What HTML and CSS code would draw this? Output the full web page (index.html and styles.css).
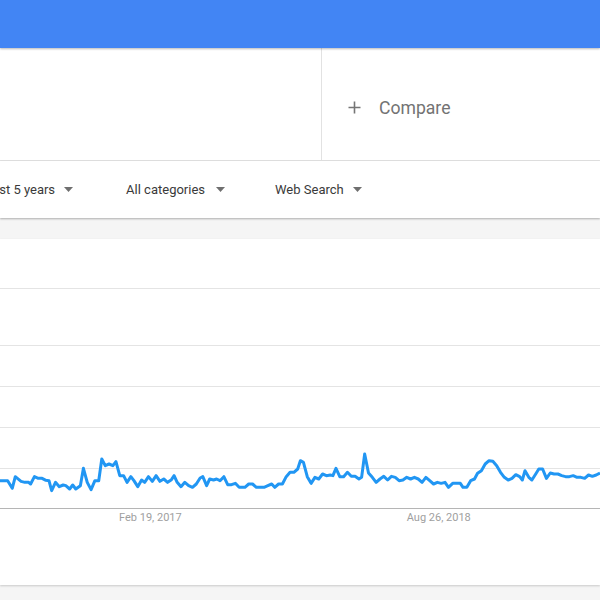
FILE: index.html
```html
<!DOCTYPE html>
<html lang="en">
<head>
<meta charset="utf-8">
<title>Trends</title>
<link rel="stylesheet" href="styles.css">
</head>
<body>
  <header class="topbar"></header>
  <section class="search-panel">
    <div class="term-box"></div>
    <div class="compare">
      <svg class="plus" width="13" height="13" viewBox="0 0 13 13"><path d="M6.5 0.5V12.5M0.5 6.5H12.5"/></svg>
      <span class="compare-label">Compare</span>
    </div>
  </section>
  <nav class="filters">
    <div class="filter first">Past 5 years<svg class="caret" width="9" height="5" viewBox="0 0 9 5"><path d="M0 0H9L4.5 5Z"/></svg></div>
    <div class="filter second">All categories<svg class="caret wide" width="9" height="5" viewBox="0 0 9 5"><path d="M0 0H9L4.5 5Z"/></svg></div>
    <div class="filter">Web Search<svg class="caret" width="9" height="5" viewBox="0 0 9 5"><path d="M0 0H9L4.5 5Z"/></svg></div>
  </nav>
  <main class="chart-card">
    <svg class="plot" width="600" height="270" viewBox="0 60 1568 810" preserveAspectRatio="none">
      <g class="grid">
        <line x1="0" x2="1568" y1="208.5" y2="208.5" vector-effect="non-scaling-stroke"/>
        <line x1="0" x2="1568" y1="379.5" y2="379.5" vector-effect="non-scaling-stroke"/>
        <line x1="0" x2="1568" y1="502.5" y2="502.5" vector-effect="non-scaling-stroke"/>
        <line x1="0" x2="1568" y1="625.5" y2="625.5" vector-effect="non-scaling-stroke"/>
        <line x1="0" x2="1568" y1="748.5" y2="748.5" vector-effect="non-scaling-stroke"/>
      </g>
      <line class="axis" x1="0" x2="1568" y1="868.5" y2="868.5" vector-effect="non-scaling-stroke"/>
      <polyline class="series" vector-effect="non-scaling-stroke" points="0,785 20,785 32,808 40,773 55,787 65,790 75,790 80,795 90,773 100,778 110,778 120,784 128,785 135,815 145,790 155,803 165,798 172,800 182,810 190,798 198,810 210,800 218,748 228,790 238,812 248,785 258,785 266,720 275,740 285,735 295,740 303,728 313,770 323,770 332,790 342,773 350,785 360,803 370,783 378,790 388,773 398,787 408,770 418,787 428,780 438,790 448,782 455,770 463,790 473,803 483,790 493,800 503,805 513,795 523,777 530,773 540,800 548,780 558,783 566,780 575,785 585,773 595,797 605,797 615,793 625,805 640,805 650,795 660,795 670,805 690,805 700,800 710,795 718,805 728,795 738,795 748,773 758,760 768,760 778,750 785,725 793,730 803,773 813,793 823,775 833,780 843,765 853,770 863,768 870,770 878,748 888,773 898,773 908,760 918,772 928,772 938,780 945,775 953,705 963,762 973,775 983,790 993,780 1003,772 1013,783 1023,772 1033,775 1043,785 1053,783 1063,775 1073,780 1083,775 1093,780 1103,790 1113,775 1123,785 1133,795 1143,790 1153,793 1163,790 1172,805 1183,793 1193,793 1203,793 1210,805 1220,805 1230,785 1240,780 1248,763 1258,755 1268,735 1278,725 1288,727 1298,740 1308,760 1318,775 1328,783 1338,778 1348,767 1358,773 1365,783 1372,755 1382,775 1390,783 1400,765 1408,750 1418,750 1428,778 1438,762 1448,765 1458,765 1468,770 1478,773 1488,773 1498,770 1508,775 1518,775 1528,778 1538,768 1548,772 1558,768 1568,762"/>
    </svg>
    <div class="x-labels">
      <span class="x-label feb">Feb 19, 2017</span>
      <span class="x-label aug">Aug 26, 2018</span>
    </div>
  </main>
</body>
</html>
```
FILE: styles.css
```css
html, body {
  margin: 0;
  padding: 0;
}
body {
  width: 600px;
  height: 600px;
  overflow: hidden;
  background: #f5f5f5;
  font-family: Roboto, "Liberation Sans", Arial, sans-serif;
}
.topbar {
  height: 48px;
  background: #4285f4;
  box-shadow: 0 1px 2px rgba(0, 0, 0, 0.28);
  position: relative;
  z-index: 2;
}
.search-panel {
  display: flex;
  height: 112px;
  background: #fff;
  border-bottom: 1px solid #e2e2e2;
}
.term-box {
  width: 321px;
  border-right: 1px solid #e2e2e2;
}
.compare {
  display: flex;
  align-items: center;
  padding-left: 26px;
  padding-top: 7px;
}
.plus {
  display: block;
  fill: none;
  stroke: #757575;
  stroke-width: 1.6;
}
.compare-label {
  margin-left: 18px;
  font-size: 17.6px;
  color: #737373;
}
.filters {
  display: flex;
  align-items: center;
  height: 57px;
  background: #fff;
  box-shadow: 0 1px 2px rgba(0, 0, 0, 0.3);
  position: relative;
  z-index: 1;
  overflow: hidden;
}
.filter {
  display: flex;
  align-items: center;
  font-size: 13px;
  color: #3a3a3a;
  white-space: nowrap;
}
.filter.first {
  margin-left: -16px;
  margin-right: 53px;
}
.filter.second {
  margin-right: 50px;
}
.caret {
  display: block;
  margin-left: 9px;
  fill: #6f6f6f;
}
.caret.wide {
  margin-left: 11px;
}
.chart-card {
  display: block;
  margin-top: 21px;
  height: 346px;
  background: #fff;
  box-shadow: 0 1px 2px rgba(0, 0, 0, 0.18);
}
.plot {
  display: block;
}
.grid line {
  stroke: #e4e4e4;
  stroke-width: 1;
  shape-rendering: crispEdges;
}
.axis {
  stroke: #b5b5b5;
  stroke-width: 1;
  shape-rendering: crispEdges;
}
.series {
  fill: none;
  stroke: #2196f3;
  stroke-width: 3;
  stroke-linejoin: round;
}
.x-labels {
  display: flex;
  height: 16px;
  align-items: center;
  font-size: 11px;
  color: #a0a0a0;
}
.x-label.feb {
  margin-left: 119px;
}
.x-label.aug {
  margin-left: 225px;
}
```
